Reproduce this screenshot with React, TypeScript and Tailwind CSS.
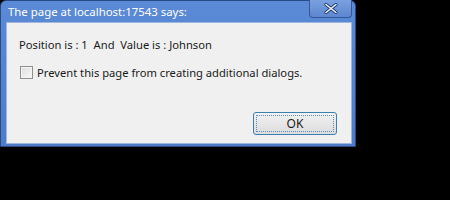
import React from 'react';

const App: React.FC = () => {
    return (
        <div className="w-[450px] h-[200px] bg-black" style={{ fontFamily: '"Noto Sans", "Open Sans", sans-serif' }}>
            <div className="w-[356px] h-[147px] flex flex-col rounded-t-[6px] border border-[#2a4a85] bg-gradient-to-b from-[#5b8ad6] to-[#4e7cc6] pl-[5px] pr-[3px] pb-[2px]">
                {/* title bar */}
                <div className="relative h-[21px] shrink-0 flex items-center">
                    <span className="pl-[2px] pt-[1px] text-[11.4px] text-white leading-none">The page at localhost:17543 says:</span>
                    <button className="absolute right-[0px] top-[-1px] w-[43px] h-[18px] rounded-b-[4px] border border-[#34569a] border-t-0 bg-gradient-to-b from-[#7aa0e0] to-[#5c87cf] flex items-center justify-center">
                        <svg width="14" height="11" viewBox="0 0 14 11">
                            <path d="M2 1.5 L12 9.5 M12 1.5 L2 9.5" stroke="#1f3766" strokeWidth="3.2" strokeLinecap="round" />
                            <path d="M2 1.5 L12 9.5 M12 1.5 L2 9.5" stroke="#eef3fb" strokeWidth="1.6" strokeLinecap="round" />
                        </svg>
                    </button>
                </div>
                {/* body */}
                <div className="flex-1 flex flex-col border border-[#9fb7de] bg-[#f0f0f0] pl-[12px] pr-[14px]">
                    <p className="mt-[14px] text-[11.2px] text-[#1a1a1a] leading-[15px] whitespace-pre">Position is : 1  And  Value is : Johnson</p>
                    <label className="mt-[13px] flex items-center gap-[4px] text-[11.2px] text-[#1a1a1a] leading-[15px]">
                        <span className="ml-[1px] w-[13px] h-[13px] border border-[#8f8f8f] bg-gradient-to-br from-[#dcdcdc] to-[#f8f8f8] shadow-[inset_0_0_0_1px_#f4f4f4]" />
                        Prevent this page from creating additional dialogs.
                    </label>
                    <div className="flex-1 flex items-end justify-end pb-[8px]">
                        <button className="w-[84px] h-[23px] rounded-[3px] border border-[#3c7fb1] bg-gradient-to-b from-[#f2f2f2] to-[#dcdcdc] p-[2px]">
                            <span className="flex h-full w-full items-center justify-center border border-dotted border-[#5a8cc0] text-[12px] text-[#1a1a1a] leading-none">OK</span>
                        </button>
                    </div>
                </div>
            </div>
        </div>
    );
};

export default App;
